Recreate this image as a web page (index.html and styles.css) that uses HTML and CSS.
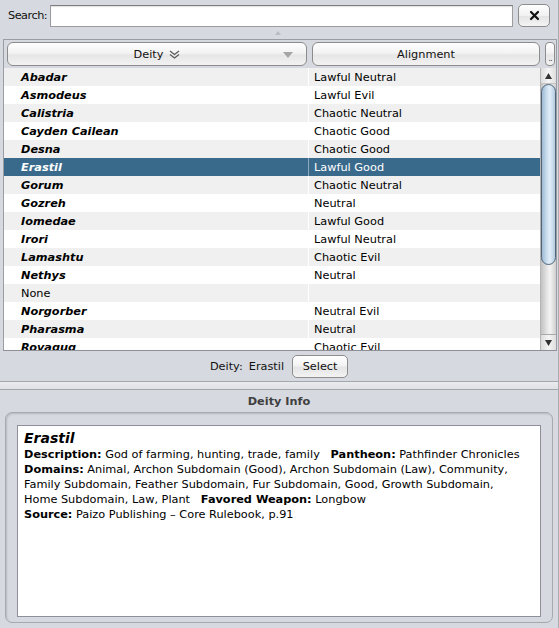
FILE: index.html
```html
<!DOCTYPE html>
<html>
<head>
<meta charset="utf-8">
<link rel="stylesheet" href="styles.css">
</head>
<body>
<div class="top">
  <div class="search-row">
    <label class="search-label">Search:</label>
    <div class="search-input"></div>
    <div class="clear-btn">
      <svg width="11" height="11" viewBox="0 0 11 11"><path d="M2 2 L9 9 M9 2 L2 9" stroke="#111" stroke-width="2.2" stroke-linecap="round"/></svg>
    </div>
  </div>
  <div class="grip-row"><span class="grip"></span></div>
  <div class="table">
    <div class="thead">
      <div class="th th-deity">
        <span class="th-label">Deity</span>
        <svg class="chev" width="11" height="9" viewBox="0 0 11 9"><path d="M1 1 L5.5 4.5 L10 1 M1 4.5 L5.5 8 L10 4.5" fill="none" stroke="#555" stroke-width="1.1"/></svg>
        <span class="th-drop"></span>
      </div>
      <div class="th th-align">Alignment</div>
      <div class="th th-more"><span class="dots">..</span></div>
    </div>
    <div class="tbody">
      <div class="rows">
        <div class="row odd"><div class="c1 god">Abadar</div><div class="c2">Lawful Neutral</div></div>
        <div class="row"><div class="c1 god">Asmodeus</div><div class="c2">Lawful Evil</div></div>
        <div class="row odd"><div class="c1 god">Calistria</div><div class="c2">Chaotic Neutral</div></div>
        <div class="row"><div class="c1 god">Cayden Cailean</div><div class="c2">Chaotic Good</div></div>
        <div class="row odd"><div class="c1 god">Desna</div><div class="c2">Chaotic Good</div></div>
        <div class="row sel"><div class="c1 god">Erastil</div><div class="c2">Lawful Good</div></div>
        <div class="row odd"><div class="c1 god">Gorum</div><div class="c2">Chaotic Neutral</div></div>
        <div class="row"><div class="c1 god">Gozreh</div><div class="c2">Neutral</div></div>
        <div class="row odd"><div class="c1 god">Iomedae</div><div class="c2">Lawful Good</div></div>
        <div class="row"><div class="c1 god">Irori</div><div class="c2">Lawful Neutral</div></div>
        <div class="row odd"><div class="c1 god">Lamashtu</div><div class="c2">Chaotic Evil</div></div>
        <div class="row"><div class="c1 god">Nethys</div><div class="c2">Neutral</div></div>
        <div class="row odd"><div class="c1">None</div><div class="c2"></div></div>
        <div class="row"><div class="c1 god">Norgorber</div><div class="c2">Neutral Evil</div></div>
        <div class="row odd"><div class="c1 god">Pharasma</div><div class="c2">Neutral</div></div>
        <div class="row"><div class="c1 god">Rovagug</div><div class="c2">Chaotic Evil</div></div>
      </div>
      <div class="vscroll">
        <div class="sb-up"><svg width="7" height="6" viewBox="0 0 7 6"><path d="M3.5 0 L7 6 L0 6 Z" fill="#333"/></svg></div>
        <div class="sb-track">
          <div class="sb-thumb"></div>
        </div>
        <div class="sb-down"><svg width="7" height="6" viewBox="0 0 7 6"><path d="M0 0 L7 0 L3.5 6 Z" fill="#333"/></svg></div>
      </div>
    </div>
  </div>
  <div class="select-row">
    <span class="sel-label">Deity:</span>
    <span class="sel-value">Erastil</span>
    <div class="btn">Select</div>
  </div>
</div>
<div class="divider"></div>
<div class="bottom">
  <div class="info-title">Deity Info</div>
  <div class="info-box">
    <div class="info-text">
      <div class="info-name">Erastil</div>
      <div class="info-body">
        <b>Description:</b> God of farming, hunting, trade, family &nbsp; <b>Pantheon:</b> Pathfinder Chronicles<br>
        <b>Domains:</b> Animal, Archon Subdomain (Good), Archon Subdomain (Law), Community,<br>
        Family Subdomain, Feather Subdomain, Fur Subdomain, Good, Growth Subdomain,<br>
        Home Subdomain, Law, Plant &nbsp; <b>Favored Weapon:</b> Longbow<br>
        <b>Source:</b> Paizo Publishing – Core Rulebook, p.91
      </div>
    </div>
  </div>
</div>
</body>
</html>
```

FILE: styles.css
```css
* { box-sizing: border-box; }
html, body { margin: 0; padding: 0; }
body {
  width: 559px;
  height: 628px;
  overflow: hidden;
  background: #d6d9df;
  font-family: "DejaVu Sans", sans-serif;
  font-size: 11.3px;
  color: #000;
  border-right: 1px solid #a9acb1;
}
.top { height: 381px; display: flex; flex-direction: column; }

.search-row {
  display: flex;
  align-items: center;
  height: 23px;
  margin-top: 4px;
  padding-left: 8px;
}
.search-label { flex: none; width: 42px; white-space: nowrap; color: #111; letter-spacing: -0.5px; }
.search-input {
  flex: none;
  width: 463px;
  height: 22px;
  background: #fff;
  border: 1px solid #9c9c9c;
  border-top-color: #7d7d7d;
  box-shadow: inset 0 1px 1px rgba(0,0,0,0.12);
}
.clear-btn {
  flex: none;
  margin-left: 5px;
  width: 32px;
  height: 23px;
  border: 1px solid #8d8d8d;
  border-radius: 5px;
  background: linear-gradient(#ffffff, #f1f1f1 50%, #e4e4e4 55%, #f4f4f4);
  display: flex;
  align-items: center;
  justify-content: center;
}
.grip-row { height: 12px; display: flex; justify-content: center; align-items: center; }
.grip {
  width: 0; height: 0;
  border-left: 3px solid transparent;
  border-right: 3px solid transparent;
  border-bottom: 4px solid #b9bcc1;
  margin-left: -3px;
}

.table {
  margin-left: 3px;
  width: 554px;
  height: 312px;
  border: 1px solid #9a9da2;
  border-bottom-color: #8e9095;
  display: flex;
  flex-direction: column;
}
.thead {
  height: 28px;
  display: flex;
  align-items: flex-start;
  padding-top: 2px;
  padding-left: 3px;
  gap: 5px;
  background: #d6d9df;
}
.th {
  height: 24px;
  border: 1px solid #8c8c8c;
  border-radius: 6px;
  background: linear-gradient(#fefefe, #f3f3f3 45%, #e6e6e6 55%, #f2f2f2);
  display: flex;
  align-items: center;
  justify-content: center;
  color: #111;
  position: relative;
}
.th-deity { width: 300px; }
.chev { margin-left: 6px; margin-top: 1px; }
.th-drop {
  position: absolute;
  right: 13px;
  top: 9px;
  width: 0; height: 0;
  border-left: 5px solid transparent;
  border-right: 5px solid transparent;
  border-top: 6px solid #a5a5a5;
}
.th-align { width: 228px; }
.th-more { width: 10px; border-radius: 4px; align-items: flex-end; }
.dots { font-size: 9px; line-height: 9px; margin-bottom: 2px; letter-spacing: -1px; color: #555; }

.tbody { flex: 1; display: flex; overflow: hidden; }
.rows { width: 536px; overflow: hidden; }
.row { height: 18px; display: flex; background: #fff; }
.row.odd { background: #f0f0f0; }
.row.sel { background: #396a8c; color: #fff; }
.c1 {
  width: 305px;
  padding-left: 17px;
  border-right: 1px solid #fff;
  line-height: 19px;
  white-space: nowrap;
}
.row.sel .c1 { border-right-color: #8eaac0; }
.c2 { flex: 1; padding-left: 5px; line-height: 19px; white-space: nowrap; }
.god { font-weight: bold; font-style: italic; }

.vscroll {
  width: 16px;
  display: flex;
  flex-direction: column;
  border-left: 1px solid #b5b5b5;
  background: linear-gradient(to right, #c2c2c2, #e9e9e9 45%, #f3f3f3 60%, #cfcfcf);
}
.sb-up, .sb-down {
  height: 16px;
  display: flex;
  align-items: center;
  justify-content: center;
  background: linear-gradient(to right, #dcdcdc, #f5f5f5 50%, #dedede);
}
.sb-up { border-bottom: 1px solid #c4c4c4; }
.sb-down { border-top: 1px solid #a8a8a8; }
.sb-track { flex: 1; position: relative; }
.sb-thumb {
  position: absolute;
  left: 0;
  right: 0;
  top: 0;
  height: 181px;
  border: 1px solid #4f6478;
  border-radius: 8px;
  background: linear-gradient(to right, #9fb9d2, #c9dcee 35%, #e2eef8 60%, #b5cbe0);
}

.select-row {
  flex: 1;
  display: flex;
  align-items: center;
  justify-content: center;
  gap: 7px;
  padding-top: 1px;
  color: #111;
}
.sel-label { margin-right: -1px; }
.btn {
  margin-left: 1px;
  width: 56px;
  height: 23px;
  border: 1px solid #8d8d8d;
  border-radius: 5px;
  background: linear-gradient(#ffffff, #f3f3f3 45%, #e5e5e5 55%, #f3f3f3);
  display: flex;
  align-items: center;
  justify-content: center;
}

.divider {
  height: 9px;
  border-top: 1px solid #a3a6ab;
  border-bottom: 1px solid #a3a6ab;
  background: linear-gradient(#e9ebee, #dfe1e5);
}
.bottom { height: 238px; display: flex; flex-direction: column; }
.info-title {
  height: 22px;
  display: flex;
  align-items: center;
  justify-content: center;
  font-weight: bold;
  color: #3f3f3f;
}
.info-box {
  margin: 0 5px 0 5px;
  height: 211px;
  border: 1px solid #a7a9ae;
  border-radius: 7px;
  box-shadow: inset 1px 1px 2px rgba(0,0,0,0.15);
  padding: 12px 11px 5px 11px;
}
.info-text {
  height: 100%;
  background: #fff;
  border: 1px solid #8f8f9c;
  padding: 4px 6px;
}
.info-name { font-weight: bold; font-style: italic; font-size: 14px; line-height: 17px; }
.info-body { line-height: 15px; white-space: nowrap; }
```
